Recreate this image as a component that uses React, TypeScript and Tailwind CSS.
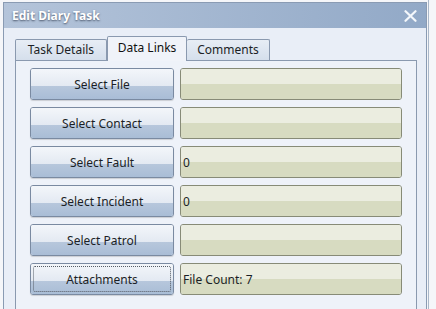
import React from "react";

const ROWS: { label: string; value: string; focused?: boolean }[] = [
  { label: "Select File", value: "" },
  { label: "Select Contact", value: "" },
  { label: "Select Fault", value: "0" },
  { label: "Select Incident", value: "0" },
  { label: "Select Patrol", value: "" },
  { label: "Attachments", value: "File Count: 7", focused: true },
];

const FONT = { fontFamily: '"Noto Sans", "Open Sans", Arial, sans-serif' };

function CloseIcon() {
  return (
    <svg width="13" height="12" viewBox="0 0 13 12" className="block">
      <path d="M1.5 1.2 L11.5 10.8 M11.5 1.2 L1.5 10.8" stroke="#f4f7fb" strokeWidth="2.2" strokeLinecap="round" />
    </svg>
  );
}

function LinkRow({ label, value, focused }: { label: string; value: string; focused?: boolean }) {
  return (
    <div className="flex h-[32px] gap-[6px]">
      {/* button */}
      <div className="relative w-[144px] h-full rounded-[3px] border border-[#7a8aa1] shadow-[0_1px_1px_rgba(0,0,0,0.15)] overflow-hidden flex flex-col">
        <div className="h-[17px] bg-gradient-to-b from-[#f3f6fa] to-[#e3e9f2]" />
        <div className="flex-1 bg-gradient-to-b from-[#b7c7dc] to-[#a9bdd6]" />
        {focused && (
          <div className="absolute inset-[2px] border border-dotted border-[#555c66] rounded-[2px]" />
        )}
        <span className="absolute inset-0 flex items-center justify-center pt-px text-[12px] text-[#1b1f26]">
          {label}
        </span>
      </div>
      {/* read-only field */}
      <div className="relative w-[222px] h-full rounded-[3px] border border-[#878b77] shadow-[inset_1px_1px_1px_rgba(0,0,0,0.15)] overflow-hidden flex flex-col">
        <div className="h-[15px] bg-[#ebede0]" />
        <div className="flex-1 bg-[#d7dbc1]" />
        <span className="absolute inset-0 flex items-center pl-[2px] pt-px text-[12px] text-[#1b1f26]">
          {value}
        </span>
      </div>
    </div>
  );
}

export default function App() {
  return (
    <div className="w-[436px] h-[309px] overflow-hidden bg-[#f5f6f9] flex" style={FONT}>
      {/* dialog window */}
      <div className="ml-[3px] mt-[2px] w-[424px] h-[400px] shrink-0 border border-[#8a9bb3] flex flex-col">
        {/* title bar */}
        <div className="h-[25px] shrink-0 bg-gradient-to-r from-[#b4c4da] to-[#92a9c7] flex items-center justify-between pl-[8px] pr-[9px]">
          <span className="text-[12px] font-bold text-white [text-shadow:0_1px_2px_rgba(30,40,60,0.7)]">
            Edit Diary Task
          </span>
          <CloseIcon />
        </div>

        {/* body */}
        <div className="flex-1 bg-[#e9eef7] pl-[11px] pr-[9px] pt-[7px] flex flex-col">
          {/* tabs */}
          <div className="flex items-end h-[25px] shrink-0">
            <div className="w-[92px] h-[21px] border border-b-0 border-[#8a99af] bg-gradient-to-b from-[#e7edf5] to-[#d5dfec] rounded-t-[2px] flex items-center justify-center text-[12px] text-[#1b1f26]">
              Task Details
            </div>
            <div className="w-[80px] h-[25px] -mb-px relative z-10 border border-b-0 border-[#8a99af] bg-[#f0f3f9] rounded-t-[2px] flex items-start pt-[2px] justify-center text-[12px] text-[#111]">
              Data Links
            </div>
            <div className="w-[83px] h-[21px] border border-b-0 border-l-0 border-[#8a99af] bg-gradient-to-b from-[#e7edf5] to-[#d5dfec] rounded-t-[2px] flex items-center justify-center text-[12px] text-[#1b1f26]">
              Comments
            </div>
          </div>

          {/* tab panel */}
          <div className="w-[402px] flex-1 border border-[#8a99af] bg-[#eef2f9] pl-[14px] pt-[7px] flex flex-col gap-[7px]">
            {ROWS.map((r) => (
              <LinkRow key={r.label} label={r.label} value={r.value} focused={r.focused} />
            ))}
          </div>
        </div>
      </div>

      {/* background beyond the window */}
      <div className="flex-1 flex">
        <div className="ml-[1px] w-px h-full bg-[#aab7c8]" />
      </div>
    </div>
  );
}
